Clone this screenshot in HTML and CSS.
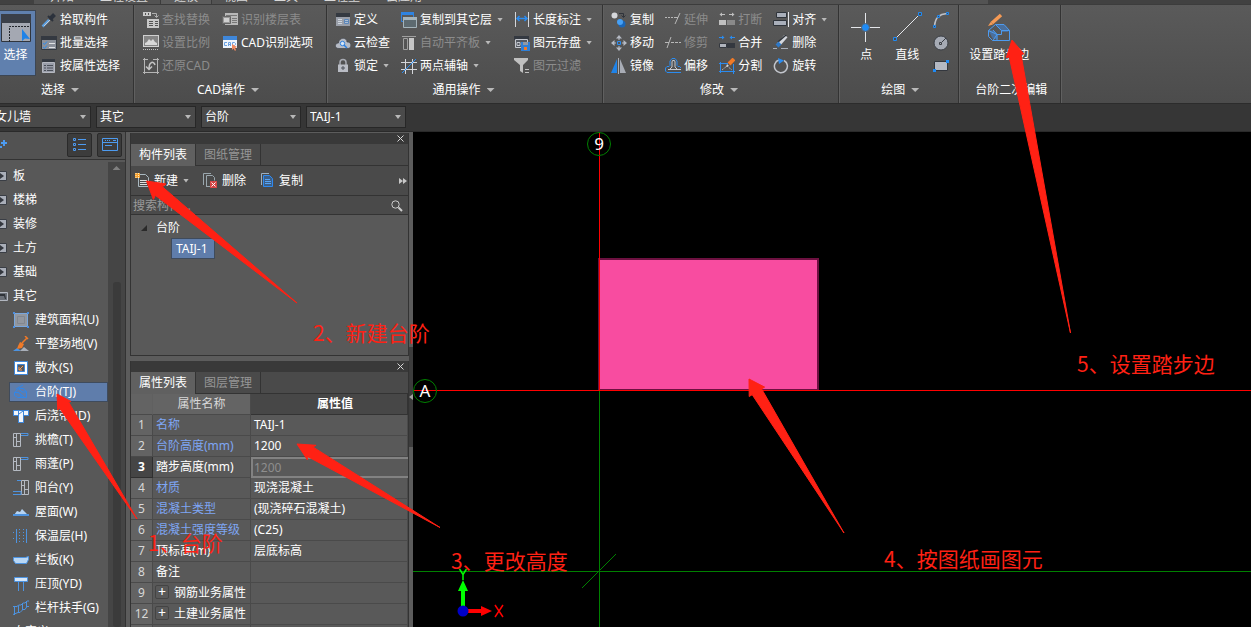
FILE: index.html
```html
<!DOCTYPE html>
<html lang="zh-CN">
<head>
<meta charset="utf-8">
<title>台阶建模</title>
<link rel="stylesheet" href="styles.css">
</head>
<body>
<div class="app">
  <nav class="tabs">
    <span class="tabs-app"></span>
    <a href="#">开始</a><a href="#">工程设置</a><a href="#" class="current">建模</a><a href="#">视图</a><a href="#">工具</a><a href="#">工程量</a><a href="#">云应用</a>
    <span class="tabs-end"></span>
  </nav>

  <header class="ribbon">
    <section class="group group-select">
      <div class="group-body">
        <button class="big active">
          <svg width="30" height="30" viewBox="0 0 30 30"><path fill="#a4a8b2" stroke="#30353d" d="M.5 2.500h29v27H.5z"/><path fill="#3a3f48" d="M0 2h30v9H0z"/><path fill="none" stroke="#22262c" stroke-dasharray="2 1" d="M8.500 30V14.500H29"/><path fill="#1f83e8" d="M21 17v12l3-2.500 5 .500z"/></svg>
          <span>选择</span>
        </button>
        <div class="col">
          <button class="tool"><svg viewBox="0 0 16 16"><path stroke="#5b9fe0" stroke-width="2.500" d="M1.500 14.500 8 8"/><path stroke="#c6cad2" stroke-width="1" d="M3 14l6-6"/><path stroke="#2c323c" stroke-width="4" d="M9 7l4.500-4.500"/><path stroke="#2c323c" stroke-width="2" d="M7 4l5 5"/></svg>拾取构件</button>
          <button class="tool"><svg viewBox="0 0 16 16"><path fill="#8b909a" stroke="#343941" d="M.5 1.500h15v13H.5z"/><path fill="#343941" d="M0 1h16v4H0z"/><path fill="none" stroke="#2b8cf0" d="M2 8l1.500 1.500L6 6.500M2 12l1.500 1.500L6 10.500"/><path stroke="#e0e2e6" d="M8 8.500h6M8 12.500h6"/></svg>批量选择</button>
          <button class="tool"><svg viewBox="0 0 16 16"><path fill="#343941" d="M1 1h13v4H1z"/><path fill="#9a9eaa" stroke="#b5b8c0" d="M1.500 4.500h12v10h-12z"/><path stroke="#4a4f58" d="M3 7.500h2M6 7.500h6M3 10h2M6 10h6M3 12.500h2M6 12.500h6"/></svg>按属性选择</button>
        </div>
      </div>
      <button class="group-title">选择<i class="caret"></i></button>
    </section>

    <section class="group group-cad">
      <div class="group-body">
        <div class="col">
          <button class="tool" disabled><svg viewBox="0 0 16 16"><path fill="#c9c9c9" d="M0 0h8v4H0zM4 7h12v9H4z"/><path stroke="#555" d="M2.500 1v2M5.500 1v2M6 9.500h4M6 11.500h4M6 13.500h4M12 9.500h3M12 11.500h3M12 13.500h3"/><path fill="none" stroke="#b0b0b0" d="M9 1.500h4.500V5M11.500 3.500l2 2 2-2"/></svg>查找替换</button>
          <button class="tool" disabled><svg viewBox="0 0 16 16"><path fill="#d0d0d0" d="M0 0h16v12H0z"/><path fill="#858585" d="M1 1h14v10H1z"/><path fill="#d8d8d8" d="M2 10V8l2-1 2-3 2 2 2-2 2 3 2 1v2z"/><path stroke="#c4c4c4" stroke-dasharray="1 1" d="M0 14.500h16"/></svg>设置比例</button>
          <button class="tool" disabled><svg viewBox="0 0 16 16"><path fill="none" stroke="#b5b5b5" d="M1.500 0v16M0 14.500h16M0 1.500h5M10 1.500h6M14.500 0v16"/><path fill="none" stroke="#c4c4c4" stroke-width="1.500" d="M12 7C11 3 6 3 6 11M3 8.500l3 3 3-3"/></svg>还原CAD</button>
        </div>
        <div class="col">
          <button class="tool" disabled><svg viewBox="0 0 16 16"><path fill="#b8b8b8" d="M3 1h13v12H3z"/><path stroke="#777" d="M4 3.500h11M10 6.500h5M10 8.500h5M10 10.500h5"/><path fill="#999" stroke="#666" d="M.5 4.500h8v7h-8z"/><path fill="#d0d0d0" d="M2 6h5v4H2z"/></svg>识别楼层表</button>
          <button class="tool"><svg viewBox="0 0 16 16"><path fill="#eef4fb" d="M1 1h14v12H1z"/><path fill="#3f87da" d="M1 1h14v4H1z"/><path fill="none" stroke="#6aa2e2" d="M5 7.500H2.500v3H5M6.500 11V7.500h2V11M6.500 9.500h2M10.500 7.500h2l1 1v1l-1 1h-2z"/><path fill="#f08a60" d="M10 9l5 3-2 1 1 2-1 1-1.500-2.500L10 15z"/></svg>CAD识别选项</button>
        </div>
      </div>
      <button class="group-title">CAD操作<i class="caret"></i></button>
    </section>

    <section class="group group-common">
      <div class="group-body">
        <div class="col">
          <button class="tool"><svg viewBox="0 0 16 16"><path fill="#9a9fa9" d="M1 1h14v13H1z"/><path fill="#343941" d="M1 1h14v4H1z"/><path fill="none" stroke="#cfd6df" d="M3 7.500h4M3 9.500h4M3 11.500h4"/><path fill="#aebfd2" stroke="#5c87ba" d="M9.500 7.500h4v4h-4zM9 9.500h4"/></svg>定义</button>
          <button class="tool"><svg viewBox="0 0 16 16"><path fill="#b6bbc5" stroke="#3f444c" stroke-width=".7" d="M4 13.500C-1 13.500-.5 8 3.500 8 4 2 12 2 12 7c5-.500 5 6.500 1 6.500z"/><circle cx="7.500" cy="8.500" r="2.200" fill="#d8e6f6" stroke="#2b7fe0"/><path stroke="#2b7fe0" stroke-width="1.500" d="M9 10l3 3"/></svg>云检查</button>
          <button class="tool"><svg viewBox="0 0 16 16"><path fill="none" stroke="#a8abb3" stroke-width="1.500" d="M5 7V4.500a3 3 0 0 1 6 0V7"/><path fill="#b9bcc4" d="M3 6.500h10V14H3z"/><path stroke="#4c5058" d="M8 8v4M6 10h4"/></svg>锁定<i class="caret"></i></button>
        </div>
        <div class="col">
          <button class="tool"><svg viewBox="0 0 16 16"><path fill="none" stroke="#2f83e0" d="M.5.500h12v9H.5z"/><path fill="#2f83e0" d="M0 0h13v3H0z"/><path fill="#5d6a70" stroke="#a5b4bb" d="M2.500 6.500h13v9h-13z"/><path fill="#a5b4bb" d="M2 5h14v3H2z"/></svg>复制到其它层<i class="caret"></i></button>
          <button class="tool" disabled><svg viewBox="0 0 16 16"><path stroke="#a0a0a0" d="M1 1.500h14"/><path fill="none" stroke="#a0a0a0" d="M2.500 3.500h4v11h-4z"/><path fill="#c6c6c6" d="M8 3h5v12H8z"/></svg>自动平齐板<i class="caret"></i></button>
          <button class="tool"><svg viewBox="0 0 16 16"><path stroke="#d4d6da" d="M0 4.500h16M0 11.500h16M4.500 1v15M11.500 1v15"/><path stroke="#2b8cf0" d="M1 15 15 1"/></svg>两点辅轴<i class="caret"></i></button>
        </div>
        <div class="col">
          <button class="tool"><svg viewBox="0 0 16 16"><path stroke="#d4d6da" d="M1.500 0v15M14.500 0v15"/><path fill="none" stroke="#2b8cf0" stroke-width="1.500" d="M3 6.500h10M5.500 4 3 6.500 5.500 9M10.500 4 13 6.500 10.500 9"/></svg>长度标注<i class="caret"></i></button>
          <button class="tool"><svg viewBox="0 0 16 16"><path fill="#343941" d="M0 1h15v4H0z"/><path fill="#545961" stroke="#c5c8cf" d="M1.500 4.500h12v8h-12z"/><path fill="none" stroke="#c5c8cf" d="M3 7.500h3v3H3z"/><path fill="#2f7fd6" d="M7 7h9v9H7z"/><path fill="#8f98a5" d="M9 7h5v3H9z"/><path fill="#f07a28" d="M10 12h3v3h-3z"/></svg>图元存盘<i class="caret"></i></button>
          <button class="tool" disabled><svg viewBox="0 0 16 16"><path fill="#c0c0c0" d="M0 0h14v2L9 7v8l-3-2V7L0 2z"/><path stroke="#c0c0c0" d="M11 11.500h4M11 14.500h4"/></svg>图元过滤</button>
        </div>
      </div>
      <button class="group-title">通用操作<i class="caret"></i></button>
    </section>

    <section class="group">
      <div class="group-body">
        <div class="col">
          <button class="tool"><svg viewBox="0 0 16 16"><circle cx="3.500" cy="3.500" r="3" fill="#d5d7db"/><circle cx="11" cy="12" r="3.500" fill="#1a66b8"/><circle cx="9" cy="10" r="3" fill="#46a0f5"/><path fill="none" stroke="#2f333a" d="M8 1.500h4.500V5M10.500 3.500l2 2 2-2"/></svg>复制</button>
          <button class="tool"><svg viewBox="0 0 16 16"><path fill="#b5bac4" d="M8 0l3 3.500H5zM8 16l3-3.500H5zM0 8l3.500-3v6zM16 8l-3.500-3v6z"/><path stroke="#b5bac4" d="M8 3v2M8 11v2M3 8h2M11 8h2"/><path fill="none" stroke="#2b8cf0" d="M6.500 6.500h3v3h-3z"/></svg>移动</button>
          <button class="tool"><svg viewBox="0 0 16 16"><path fill="#1f83e8" d="M6 1v14H0z"/><path stroke="#a8acb5" d="M7.500 0v16"/><path fill="#a8acb5" d="M9 1v14h6z"/></svg>镜像</button>
        </div>
        <div class="col">
          <button class="tool" disabled><svg viewBox="0 0 16 16"><path stroke="#b8b8b8" stroke-dasharray="2 1" d="M0 5.500h10"/><path stroke="#b8b8b8" d="M10 5.500h3M15 1l-5 11"/></svg>延伸</button>
          <button class="tool" disabled><svg viewBox="0 0 16 16"><path stroke="#b8b8b8" d="M0 7.500h4M6 2 2 13"/><path stroke="#b8b8b8" stroke-dasharray="3 1" d="M6 7.500h10"/></svg>修剪</button>
          <button class="tool"><svg viewBox="0 0 16 16"><path fill="none" stroke="#2b8cf0" d="M2 14.500L.5 13v-3L2 8.500h2l1-1V3l2-2.500h3L12 3v4.500l1 1h1.500L16 10"/><path stroke="#2b8cf0" d="M2 14.500h14"/><path fill="none" stroke="#c5c8ce" d="M16 11.500H3M5 11l2-2V4l.5-1.500h2L10 4v5l2 2"/></svg>偏移</button>
        </div>
        <div class="col">
          <button class="tool" disabled><svg viewBox="0 0 16 16"><path fill="#c0c0c0" d="M0 8h7v5H0zM3 .500v4L.500 2.500zM13 .500v4l2.500-2z"/><path fill="#8a8a8a" d="M8 8h8v5H8z"/><path stroke="#c0c0c0" d="M2 2.500h4M10 2.500h4"/></svg>打断</button>
          <button class="tool"><svg viewBox="0 0 16 16"><path fill="#b0b4bc" stroke="#34383f" d="M.5 8.500h7v4h-7z"/><path fill="#34383f" d="M8 8h8v5H8z"/><path fill="#2b8cf0" d="M3 .500v4l2.500-2zM13 .500v4l-2.500-2z"/><path stroke="#2b8cf0" d="M0 2.500h4M12 2.500h4"/></svg>合并</button>
          <button class="tool"><svg viewBox="0 0 16 16"><path fill="none" stroke="#2b8cf0" d="M0 5.500h9M1.500 4v11M0 13.500h16M14.500 6v10"/><path fill="none" stroke="#a8acb4" stroke-dasharray="2 1" d="M3 12l5-4 5 4"/><path stroke="#f07a28" stroke-width="4" d="M10 6l5-5"/><path fill="#d8d8d8" d="M7 9l1-3 2 2z"/></svg>分割</button>
        </div>
        <div class="col">
          <button class="tool"><svg viewBox="0 0 16 16"><path fill="#a9afba" stroke="#2f343b" d="M3.500.500h10v5h-10zM.5 8.500h13v5H.5z"/><path stroke="#e4e6ea" d="M15.500 0v15"/></svg>对齐<i class="caret"></i></button>
          <button class="tool"><svg viewBox="0 0 16 16"><path stroke="#a9afba" d="M0 13.500h4M8 13.500h7"/><path stroke="#d5d8de" stroke-width="4" d="M6 9l7-8"/><path stroke="#2e3238" stroke-width="1.500" d="M5 7l8-7"/><path stroke="#2d78c8" stroke-width="4" d="M4 11l3-3"/></svg>删除</button>
          <button class="tool"><svg viewBox="0 0 16 16"><path fill="none" stroke="#c2c5cc" stroke-width="1.500" d="M6 2A6.500 6.500 0 1 0 11 2.500"/><path fill="#2b8cf0" d="M5 0l6 2.500L6 6z"/></svg>旋转</button>
        </div>
      </div>
      <button class="group-title">修改<i class="caret"></i></button>
    </section>

    <section class="group group-draw">
      <div class="group-body">
        <button class="big"><svg width="30" height="30" viewBox="0 0 30 30"><path stroke="#e4e6ea" d="M0 15.500h29M14.500 1v29"/><circle cx="14.500" cy="15.500" r="4" fill="#1f8bf5" stroke="#58616c" stroke-width="1"/></svg><span>点</span></button>
        <button class="big"><svg width="30" height="30" viewBox="0 0 30 30"><path stroke="#e4e6ea" d="M4 26 26 4"/><path fill="#44494f" stroke="#1f8bf5" d="M1.500 25.500h3v3h-3zM26.500.500h3v3h-3z"/></svg><span>直线</span></button>
        <div class="col">
          <button class="tool" aria-label="弧线"><svg viewBox="0 0 16 16"><path fill="none" stroke="#bcc0c8" stroke-width="1.500" d="M1.500 14C2 6 6 2 14 1.500"/><path fill="#44494f" stroke="#1f8bf5" d="M.5 13.500h2v2h-2zM4.500 3.500h2v2h-2zM13.500.500h2v2h-2z"/></svg></button>
          <button class="tool" aria-label="圆"><svg viewBox="0 0 16 16"><circle cx="8" cy="8" r="7" fill="#a6abb5" stroke="#3a3e45"/><path fill="none" stroke="#3a3e45" d="M6.500 7.500h2v2h-2zM9 7l4-4"/></svg></button>
          <button class="tool" aria-label="矩形"><svg viewBox="0 0 16 16"><path fill="#b4b9c3" stroke="#33373e" d="M1.500 3.500h13v9h-13z"/><path fill="#1f8bf5" d="M0 11h3v3H0zM13 2h3v3h-3z"/></svg></button>
        </div>
      </div>
      <button class="group-title">绘图<i class="caret"></i></button>
    </section>

    <section class="group group-edit">
      <div class="group-body">
        <button class="big"><svg width="30" height="30" viewBox="0 0 30 30"><path fill="#4a6f9c" d="M11 12.500h9l5.500 6-2 1.500H18zM4.500 18.500h5l4 4v5l-5-1z"/><path fill="none" stroke="#4d9bf0" d="M4.500 18.500 11.500 12.500h8.500l5.500 6v10h-17l-4-4zM11.500 12.500l6 6v4h-4.500l-8.500-4M17.500 18.500h8M9 18l4 4.500v6M9 28.500l4-6"/><path stroke="#f59a55" stroke-width="3.500" d="M8 11 17 3"/><path fill="#f59a55" d="M4 14l3-4.500 2 3z"/></svg><span>设置踏步边</span></button>
      </div>
      <button class="group-title">台阶二次编辑</button>
    </section>
  </header>

  <div class="pickers">
    <label class="picker"><select aria-label="楼层"><option>女儿墙</option></select><i class="caret"></i></label>
    <label class="picker"><select aria-label="分类"><option>其它</option></select><i class="caret"></i></label>
    <label class="picker"><select aria-label="类型"><option>台阶</option></select><i class="caret"></i></label>
    <label class="picker"><select aria-label="构件"><option>TAIJ-1</option></select><i class="caret"></i></label>
  </div>

  <main class="work">
    <aside class="nav">
      <div class="nav-head">
        <svg class="nav-plus" width="8" height="16" viewBox="0 0 8 16"><path stroke="#4d9bf0" stroke-width="2" d="M1 6h6M4 3v6M0 10h2"/></svg>
        <button class="mode" aria-label="列表"><svg width="16" height="16" viewBox="0 0 16 16"><path fill="none" stroke="#4d9bf0" d="M1.500 1.500h2v2h-2zM1.500 6.500h2v2h-2zM1.500 11.500h2v2h-2zM6 2.500h8M6 7.500h8M6 12.500h8"/></svg></button>
        <button class="mode" aria-label="卡片"><svg width="16" height="16" viewBox="0 0 16 16"><path fill="none" stroke="#4d9bf0" d="M.5 1.500h15v12H.5zM0 5.500h16M3 3.500h1M5 3.500h1M7 3.500h1M11 3.500h3M3 8.500h7"/></svg></button>
      </div>
      <div class="nav-body">
        <ul class="tree">
          <li class="folder"><svg viewBox="0 0 8 16"><path fill="#a9aeb8" stroke="#3a3e45" d="M-3 3.500H6.500v9H-3z"/><path fill="#33373e" d="M0 5l4 3-4 3z"/></svg>板</li>
          <li class="folder"><svg viewBox="0 0 8 16"><path fill="#a9aeb8" stroke="#3a3e45" d="M-3 3.500H6.500v9H-3z"/><path fill="#33373e" d="M0 5l4 3-4 3z"/></svg>楼梯</li>
          <li class="folder"><svg viewBox="0 0 8 16"><path fill="#a9aeb8" stroke="#3a3e45" d="M-3 3.500H6.500v9H-3z"/><path fill="#33373e" d="M0 5l4 3-4 3z"/></svg>装修</li>
          <li class="folder"><svg viewBox="0 0 8 16"><path fill="#a9aeb8" stroke="#3a3e45" d="M-3 3.500H6.500v9H-3z"/><path fill="#33373e" d="M0 5l4 3-4 3z"/></svg>土方</li>
          <li class="folder"><svg viewBox="0 0 8 16"><path fill="#a9aeb8" stroke="#3a3e45" d="M-3 3.500H6.500v9H-3z"/><path fill="#33373e" d="M0 5l4 3-4 3z"/></svg>基础</li>
          <li class="folder"><svg viewBox="0 0 8 16"><path fill="#6b7078" stroke="#b2b7c0" d="M-3 4.500H7.500v8H-3z"/><path fill="#2f3339" d="M0 6h5l1 5H5L4 8H0z"/></svg>其它</li>
          <li class="leaf"><svg viewBox="0 0 16 16"><path fill="#92979f" stroke="#7aa7dc" d="M1.500 1.500h13v13h-13z"/><path fill="none" stroke="#82878f" d="M4.500 4.500h7v7h-7z"/><path fill="#4d8fe0" d="M0 0h2v2H0zM14 0h2v2h-2zM0 14h2v2H0zM14 14h2v2h-2z"/></svg>建筑面积(U)</li>
          <li class="leaf"><svg viewBox="0 0 16 16"><path fill="#4d93e0" d="M0 15l4-3 4 3z"/><path fill="#a9afb9" d="M7 15l4-4 5 4z"/><path fill="#f07a28" d="M5 10l2-4 4 2-2 4-5 1z"/><path stroke="#f07a28" stroke-width="1.500" d="M9 7l5-5M12 0l3 3"/></svg>平整场地(V)</li>
          <li class="leaf"><svg viewBox="0 0 16 16"><path fill="#fff" stroke="#3f87da" stroke-width="1" d="M1.500 1.500h13v13h-13z"/><path fill="#55585e" stroke="#3f87da" d="M4.500 4.500h7v7h-7z"/><path fill="none" stroke="#f59a55" d="M10 6l-4 4M6 7v3h3"/></svg>散水(S)</li>
          <li class="leaf selected"><svg viewBox="0 0 16 16"><path fill="none" stroke="#3186e8" d="M1.500 8.500 6 4.500h4l3.500 3v6H5l-3.500-2zM1.500 8.500H5l3 2v3M6 5l3 3h5M3 5l7-4M5 8l6 5"/></svg>台阶(TJ)</li>
          <li class="leaf"><svg viewBox="0 0 16 16"><path fill="#3f87da" d="M0 2h16v6h-5v7H5V8H0z"/><path fill="#f2f6fb" d="M1 3h4v4H1zM11 3h4v4h-4zM6 3h4l0 11H6z"/><path stroke="#3f87da" d="M6 6l4-3"/></svg>后浇带(JD)</li>
          <li class="leaf"><svg viewBox="0 0 16 16"><path fill="none" stroke="#b5bac2" d="M.5 1.500h7v13h-7zM3.500 1v14M0 5.500h4M4 9.500h4"/><path fill="none" stroke="#4d93e0" d="M8 1.500h7v2H8"/></svg>挑檐(T)</li>
          <li class="leaf"><svg viewBox="0 0 16 16"><path fill="none" stroke="#b5bac2" d="M.5 1.500h7v13h-7zM3.500 1v14M0 5.500h4M4 9.500h4"/><path fill="none" stroke="#4d93e0" d="M8 1.500h7v2H8"/></svg>雨蓬(P)</li>
          <li class="leaf"><svg viewBox="0 0 16 16"><path fill="none" stroke="#b5bac2" d="M8.500.500h7v14h-7zM11.500 0v15M8 5.500h4M12 9.500h4"/><path fill="none" stroke="#4d93e0" d="M4 .500h4M0 14.500h8v-3H0"/></svg>阳台(Y)</li>
          <li class="leaf"><svg viewBox="0 0 16 16"><path fill="#b5d3f2" d="M1 11l3-4 3 1 2-3 3 3 3 3z"/><path fill="#4d93e0" d="M0 10h16v2H0z"/></svg>屋面(W)</li>
          <li class="leaf"><svg viewBox="0 0 16 16"><path stroke="#4d93e0" d="M3.500 1v14M13.500 1v14"/><path stroke="#4d93e0" stroke-dasharray="1 2" d="M6.500 1v14M10.500 1v14M0 4.500h3M0 10.500h3"/></svg>保温层(H)</li>
          <li class="leaf"><svg viewBox="0 0 16 16"><path fill="#b9d7f5" stroke="#4d93e0" d="M.5 5.500h12l3-1v3l-2 4h-11l-2-3z"/></svg>栏板(K)</li>
          <li class="leaf"><svg viewBox="0 0 16 16"><path fill="#d5e6f8" stroke="#4d93e0" d="M1.500 1.500h13v4h-13z"/><path stroke="#4d93e0" d="M5.500 6v9M10.500 6v9"/></svg>压顶(YD)</li>
          <li class="leaf"><svg viewBox="0 0 16 16"><path fill="none" stroke="#4d93e0" d="M0 6.500h4M1.500 6v9M5.500 6v7M9.500 3v7M13.500 1v6M3 7l3-2h2l2-2h2l2-2h2M0 14.500l5-2h2l3-3h2l2-3h2"/></svg>栏杆扶手(G)</li>
          <li class="folder"><svg viewBox="0 0 8 16"><path fill="#a9aeb8" stroke="#3a3e45" d="M-3 3.500H6.500v9H-3z"/></svg>自定义</li>
        </ul>
        <div class="scroll"><i class="scroll-up"></i><i class="scroll-thumb"></i></div>
      </div>
    </aside>

    <div class="docks">
      <section class="dock dock-list">
        <div class="dock-bar"><button class="close" aria-label="关闭"><svg width="7" height="7" viewBox="0 0 7 7"><path stroke="#d8d8d8" d="M.5.500l6 6M6.500.500l-6 6"/></svg></button></div>
        <div class="dock-tabs"><button class="on">构件列表</button><button>图纸管理</button></div>
        <div class="dock-tools">
          <button class="tool"><svg viewBox="0 0 16 16"><path fill="none" stroke="#a9b8c0" d="M3.500 1.500h7l3 3v9h-10z"/><path stroke="#e0e0e0" d="M5 7.500h7M5 9.500h7M5 11.500h7"/><path fill="#f5a030" d="M0 0h5v5H0z"/><path stroke="#fff1c8" d="M1 0v5M3.500 0v5" stroke-dasharray="1 1"/></svg>新建<i class="caret"></i></button>
          <button class="tool"><svg viewBox="0 0 16 16"><path fill="none" stroke="#9aa7ae" d="M.5 12V.500H8M3.500 13.500v-11h6l2 2v3M8 13.500H3"/><path fill="#d64545" d="M7 8h7v7H7z"/><path stroke="#fff" d="M8.500 9.500l4 4M12.500 9.500l-4 4"/></svg>删除</button>
          <button class="tool"><svg viewBox="0 0 16 16"><path fill="none" stroke="#9ab0c4" d="M1.500 12V.500H9"/><path fill="#3c5f88" stroke="#2f8af0" d="M3.500 2.500h6l3 3v8h-9z"/><path stroke="#58a5f5" d="M5 6.500h5M5 8.500h6M5 10.500h6"/></svg>复制</button>
          <svg class="more" width="8" height="8" viewBox="0 0 8 8"><path fill="#c8c8c8" d="M0 1l4 3-4 3zM4 1l4 3-4 3z"/></svg>
        </div>
        <label class="search"><input type="text" placeholder="搜索构件..." aria-label="搜索构件"><svg width="12" height="12" viewBox="0 0 12 12"><circle cx="4.500" cy="4.500" r="3.700" fill="none" stroke="#ccc"/><path stroke="#ccc" stroke-width="2" d="M7.500 7.500 11 11"/></svg></label>
        <div class="parts">
          <div class="parts-root"><i class="twisty"></i>台阶</div>
          <button class="parts-item">TAIJ-1</button>
        </div>
      </section>

      <section class="dock dock-props">
        <div class="dock-bar"><button class="close" aria-label="关闭"><svg width="7" height="7" viewBox="0 0 7 7"><path stroke="#d8d8d8" d="M.5.500l6 6M6.500.500l-6 6"/></svg></button></div>
        <div class="dock-tabs"><button class="on">属性列表</button><button>图层管理</button></div>
        <table class="props">
          <thead><tr><th class="no"></th><th class="name">属性名称</th><th class="value">属性值</th></tr></thead>
          <tbody>
            <tr><th>1</th><td class="key">名称</td><td>TAIJ-1</td></tr>
            <tr><th>2</th><td class="key">台阶高度(mm)</td><td>1200</td></tr>
            <tr class="editing"><th>3</th><td>踏步高度(mm)</td><td class="readonly">1200</td></tr>
            <tr><th>4</th><td class="key">材质</td><td>现浇混凝土</td></tr>
            <tr><th>5</th><td class="key">混凝土类型</td><td>(现浇碎石混凝土)</td></tr>
            <tr><th>6</th><td class="key">混凝土强度等级</td><td>(C25)</td></tr>
            <tr><th>7</th><td>顶标高(m)</td><td>层底标高</td></tr>
            <tr><th>8</th><td>备注</td><td></td></tr>
            <tr><th>9</th><td><button class="expand" aria-label="展开">+</button>钢筋业务属性</td><td></td></tr>
            <tr><th>12</th><td><button class="expand" aria-label="展开">+</button>土建业务属性</td><td></td></tr>
            <tr><th></th><td></td><td></td></tr>
          </tbody>
        </table>
      </section>
    </div>
    <div class="splitter"><i></i></div>

    <div class="canvas">
      <svg width="100%" height="100%">
        <path fill="#f84ca0" stroke="#6d1040" stroke-width="2" d="M186 127h219v131H186z"/>
        <path stroke="#008000" d="M186.500 259v2000M0 439.500h4000M169 456l34-34"/>
        <path stroke="#f00" d="M186.500 0v259M0 258.500h4000"/>
        <circle cx="186" cy="12" r="11.500" fill="none" stroke="#008000"/>
        <circle cx="12" cy="259" r="11.500" fill="none" stroke="#008000"/>
        <text class="axis" x="186" y="18">9</text>
        <text class="axis" x="12" y="265">A</text>
        <path fill="#0f0" d="M48 475v-16h-3l5-11 5 11h-3v16z"/>
        <path fill="#f00" d="M52 477h16v-3l11 5-11 5v-3H52z"/>
        <circle cx="50" cy="479" r="5.500" fill="#0000c8"/>
        <path fill="none" stroke="#0f0" stroke-width="1.500" d="M46.500 437l3.500 5.500 3.500-5.500M50 442v6"/>
        <path fill="none" stroke="#f00" stroke-width="1.500" d="M82 473l8 12M90 473l-8 12"/>
      </svg>
    </div>
  </main>

  <div class="notes">
    <svg width="100%" height="100%">
      <g fill="#ff2114" stroke="#ff2114" stroke-linejoin="round">
        <path d="M57 394 71 401.500 68.600 402 137 519 59.400 408 57.800 410z"/>
        <path d="M146.500 181 166 184 162.400 186.800 297 303 155.400 195.400 153.400 199.500z"/>
        <path d="M297 444 316 445.300 312.800 446.900 440 527.500 307.200 456.300 307.400 459.900z"/>
        <path d="M749 379 764.600 387.100 761.600 388.900 844 533 752.200 394.700 749.200 396.500z"/>
        <path d="M1012 40 1023.900 53.900 1021 54.500 1070.500 333 1009.200 56.900 1006.300 57.500z"/>
      </g>
      <text x="148" y="551">1、台阶</text>
      <text x="313" y="341">2、新建台阶</text>
      <text x="451" y="569">3、更改高度</text>
      <text x="884" y="567">4、按图纸画图元</text>
      <text x="1077" y="372">5、设置踏步边</text>
    </svg>
  </div>
</div>
</body>
</html>
```
FILE: styles.css
```css
* { box-sizing: border-box; }

body {
  margin: 0;
  font: 12px/18px "Noto Sans", "Noto Sans CJK SC", sans-serif;
  color: #fff;
  background: #363636;
}

button, input, select {
  font: inherit;
  color: inherit;
  background: none;
  border: 0;
  padding: 0;
  margin: 0;
}

i { display: block; }

.app {
  position: relative;
  display: flex;
  flex-direction: column;
  height: 100vh;
  overflow: hidden;
}

.caret {
  width: 6px;
  height: 4px;
  margin-left: 2px;
  background: #b9b9b9;
  clip-path: polygon(0 0, 100% 0, 50% 100%);
}

/* tab strip */
.tabs {
  flex: none;
  display: flex;
  align-items: flex-end;
  height: 5px;
  overflow: hidden;
  background: #535353;
  border-bottom: 1px solid #3c3c3c;
}
.tabs a {
  padding: 0 13px 1px;
  line-height: 12px;
  color: #d8d8d8;
  text-decoration: none;
}
.tabs a.current { background: #5c5c5c; box-shadow: 0 0 0 1px #3c3c3c; }
.tabs-app { width: 34px; height: 5px; margin-right: 3px; background: #414141; }
.tabs-end { width: 21%; height: 5px; margin-left: auto; background: #414141; }

/* ribbon */
.ribbon {
  flex: none;
  display: flex;
  background: linear-gradient(#5a5a5a, #4c4c4c);
  border-bottom: 1px solid #2c2c2c;
}
.group {
  display: flex;
  flex-direction: column;
  padding: 3px 11px 0 8px;
  border-right: 1px solid #333;
  box-shadow: 1px 0 #606060;
}
.group-body { display: flex; gap: 11px; min-height: 69px; }
.col { display: flex; flex-direction: column; }
.tool {
  display: flex;
  align-items: center;
  gap: 3px;
  height: 23px;
  white-space: nowrap;
}
.tool svg { flex: none; width: 16px; height: 16px; }
.tool:disabled { color: #8c8c8c; }
.group-title {
  display: flex;
  align-items: center;
  justify-content: center;
  gap: 4px;
  height: 26px;
}
.group-title .caret { width: 8px; }
.big {
  display: flex;
  flex-direction: column;
  align-items: center;
  gap: 4px;
  height: 66px;
  padding: 4px 0 0;
}
.big.active {
  width: 36px;
  margin-top: 2px;
  padding: 1px 4px 0 0;
  background: #6080ae;
  border: solid #3c4654;
  border-width: 1px 1px 1px 0;
}
.group-select { padding: 3px 13px 0 0; }
.group-select .group-body { gap: 5px; }
.group-select .group-title { padding-right: 0; }
.group-cad { padding: 3px 13px 0 9px; }
.group-cad .group-body { gap: 12px; }
.group-common { padding-right: 10px; }
.group-draw { padding: 3px 9px 0 12px; }
.group-draw .big { min-width: 30px; }
.group-edit { padding: 3px 7px 0 10px; }
.group-edit .group-title { padding: 0 6px; }

/* drop-down row */
.pickers {
  flex: none;
  display: flex;
  gap: 5px;
  height: 28px;
  padding: 2px 0 3px;
  margin-left: -9px;
  border-bottom: 1px solid #2a2a2a;
}
.picker {
  display: flex;
  align-items: center;
  width: 100px;
  padding: 0 4px 0 3px;
  background: #4a4a4a;
  border: 1px solid #272727;
}
.picker select { flex: 1; min-width: 0; appearance: none; }

/* work area */
.work { flex: 1; display: flex; min-height: 0; }

.nav {
  flex: none;
  display: flex;
  flex-direction: column;
  width: 126px;
  background: #585858;
  border-right: 1px solid #333;
}
.nav-head {
  flex: none;
  display: flex;
  align-items: center;
  gap: 5px;
  height: 28px;
  padding: 0 3px 2px 0;
  background: #525252;
  border-bottom: 1px solid #333;
}
.nav-plus { margin-right: auto; }
.mode {
  display: flex;
  align-items: center;
  justify-content: center;
  width: 25px;
  height: 24px;
  background: #3c3c3c;
  border: 1px solid #2a2a2a;
  border-radius: 2px;
}
.nav-body { flex: 1; display: flex; min-height: 0; }
.tree {
  flex: 1;
  margin: 0;
  padding: 6px 0 0;
  list-style: none;
  overflow: hidden;
}
.tree li {
  display: flex;
  align-items: center;
  height: 20px;
  margin-bottom: 4px;
  white-space: nowrap;
}
.tree svg { flex: none; height: 16px; }
.folder { gap: 5px; }
.folder svg { width: 8px; }
.leaf { gap: 6px; margin-left: 9px; padding-left: 3px; border: 1px solid transparent; }
.leaf svg { width: 16px; }
.leaf.selected { background: #5f7dab; border-color: #3f4b5c; }
.scroll {
  flex: none;
  display: flex;
  flex-direction: column;
  align-items: center;
  width: 17px;
  margin-top: 2px;
  padding-top: 4px;
  background: #454545;
}
.scroll-up {
  width: 8px;
  height: 4px;
  background: #808080;
  clip-path: polygon(50% 0, 100% 100%, 0 100%);
}
.scroll-thumb {
  flex: 1;
  width: 8px;
  margin-top: 112px;
  background: #3b3b3b;
  border-radius: 3px;
}

.docks {
  flex: none;
  display: flex;
  flex-direction: column;
  gap: 5px;
  width: 283px;
  padding: 1px 0 0 4px;
  background: #5c5c5c;
}
.dock {
  display: flex;
  flex-direction: column;
  border: 1px solid #333;
  border-top: 0;
  background: #595959;
}
.dock-list { flex: none; }
.dock-props { flex: 1; min-height: 0; overflow: hidden; border-bottom: 0; }
.dock-bar {
  flex: none;
  display: flex;
  justify-content: flex-end;
  align-items: center;
  height: 11px;
  padding-right: 4px;
  background: #393939;
}
.close { display: flex; }
.dock-tabs {
  flex: none;
  display: flex;
  height: 22px;
  background: #4a4a4a;
  border-bottom: 1px solid #333;
}
.dock-tabs button {
  padding: 0 8px;
  height: 21px;
  color: #969696;
  border-right: 1px solid #333;
}
.dock-tabs .on { height: 22px; color: #fff; background: #606060; }
.dock-tools {
  display: flex;
  align-items: center;
  gap: 14px;
  height: 30px;
  padding: 0 1px 0 4px;
  background: #4a4a4a;
  border-bottom: 1px solid #333;
}
.more { margin-left: auto; }
.search {
  display: flex;
  align-items: center;
  height: 19px;
  padding: 1px 5px 0 2px;
  background: #4a4a4a;
  border-bottom: 1px solid #333;
}
.search input { flex: 1; min-width: 0; }
.search input::placeholder { color: #9a9a9a; opacity: 1; }
.parts { height: 140px; padding: 3px 10px; }
.parts-root { display: flex; align-items: center; gap: 9px; height: 20px; }
.twisty {
  width: 6px;
  height: 6px;
  background: #2a2a2a;
  clip-path: polygon(100% 0, 100% 100%, 0 100%);
}
.parts-item {
  height: 21px;
  margin-left: 30px;
  padding: 1px 6px 0 4px;
  background: #5f7dab;
  border: 1px solid #3f4b5c;
}

.props { width: 100%; border-collapse: separate; border-spacing: 0; table-layout: fixed; }
.props th, .props td {
  height: 21px;
  padding: 0 3px;
  line-height: 20px;
  font-weight: 400;
  text-align: left;
  white-space: nowrap;
  overflow: hidden;
  border: solid #4a4a4a;
  border-width: 0 1px 1px 0;
}
.props th { padding: 0; text-align: center; color: #d8d8d8; background: #636363; }
.props thead th { height: 21px; line-height: 20px; }
.props .no { width: 22px; border-right-color: #606060; }
.props .name { width: 98px; background: #646464; }
.props .value { padding-left: 12px; color: #fff; font-weight: 700; background: #474747; border-color: #333; }
.props .key { color: #7ea6f4; }
.props .editing th { color: #fff; font-weight: 700; background: #454545; border-color: #303030; }
.props .readonly { color: #8e8e8e; line-height: 17px; border: 2px solid #828282; border-right: 0; padding-left: 1px; }
.expand {
  width: 14px;
  height: 14px;
  margin: 0 5px 0 -1px;
  line-height: 10px;
  font-size: 14px;
  border: 1px solid #444;
  border-radius: 2px;
}

.splitter {
  flex: none;
  display: flex;
  flex-direction: column;
  width: 4px;
  padding-top: 215px;
  background: #5c5c5c;
}
.splitter i {
  display: flex;
  align-items: center;
  height: 100px;
  background: #3c3c3c;
}
.splitter i::after {
  content: "";
  width: 4px;
  height: 6px;
  background: #a0a0a0;
  clip-path: polygon(0 50%, 100% 0, 100% 100%);
}

.canvas { flex: 1; min-width: 0; background: #000; }
.canvas svg { display: block; }
.axis {
  font: 17px "Noto Sans", sans-serif;
  fill: #fff;
  text-anchor: middle;
}

.notes { position: absolute; inset: 0; pointer-events: none; }
.notes svg { display: block; }
.notes text { font: 21px "Noto Sans CJK SC", sans-serif; fill: #ff2114; }
```
